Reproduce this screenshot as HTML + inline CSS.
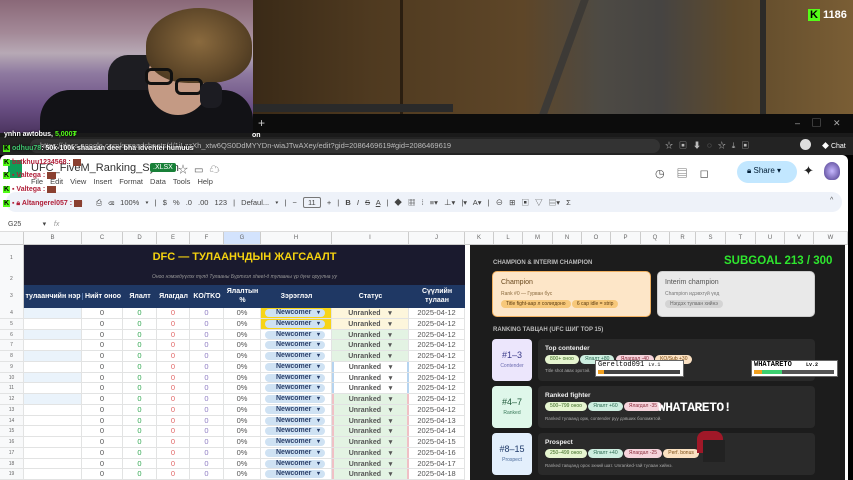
<!DOCTYPE html>
<html><head><meta charset="utf-8"><style>
*{margin:0;padding:0;box-sizing:border-box}
body{width:853px;height:480px;overflow:hidden;background:#000;font-family:"Liberation Sans","Noto Sans CJK JP",sans-serif;position:relative}
.a{position:absolute}
.t{position:absolute;white-space:nowrap}
.row{position:absolute;left:0;height:10.75px;width:465px;border-bottom:1px solid #e2e3e3;font-size:7.5px;color:#555}
.row>div{position:absolute;top:0;height:100%;text-align:center;line-height:10px;border-right:1px solid #e2e3e3}
.hdr div{position:absolute;top:0;height:100%;border-right:1px solid #ccc;text-align:center;font-size:6px;color:#666;line-height:12px}
.pill{border-radius:6px;padding:0 5px;font-size:5px;display:inline-block;line-height:9px}
.nc{position:absolute;left:4px;top:1px;width:60px;height:8px;border-radius:5px;background:#cfe2f3;color:#2a3f6a;font-size:7px;font-weight:bold;line-height:8px;text-align:left;padding-left:11px}
.nc:after{content:"▾";position:absolute;right:5px;font-size:6px}
.ur{font-size:7px;font-weight:bold;color:#555}
</style></head><body>

<!-- webcam -->
<div class="a" style="left:0;top:0;width:253px;height:133px;background:linear-gradient(180deg,#8a6878 0%,#a48a98 25%,#b7a9b5 40%,#8f7aa0 55%,#6a4f84 80%,#4c3560 100%)"></div>
<div class="a" style="left:108px;top:55px;width:60px;height:60px;background:#1d1d22;border-radius:20px"></div>
<div class="a" style="left:40px;top:90px;width:213px;height:43px;background:#121216;border-radius:30px 30px 0 0"></div>
<div class="a" style="left:148px;top:50px;width:60px;height:65px;background:#c49a84;border-radius:25px 25px 30px 30px"></div>
<div class="a" style="left:146px;top:8px;width:106px;height:75px;background:radial-gradient(ellipse at 50% 45%,#8a6a3e,#5d4628 60%,#3a2c1a 100%);border-radius:50% 50% 40% 40%"></div>
<div class="a" style="left:145px;top:68px;width:28px;height:17px;border:3px solid #111;border-radius:6px"></div>
<div class="a" style="left:175px;top:78px;width:28px;height:17px;border:3px solid #111;border-radius:6px"></div>
<div class="a" style="left:200px;top:82px;width:22px;height:26px;background:#1c1c22;border-radius:8px"></div>

<!-- game -->
<div class="a" style="left:253px;top:0;width:600px;height:114px;background:linear-gradient(90deg,#3a2a17 0%,#4f3a20 20%,#5e4628 45%,#4d4a44 58%,#464442 68%,#5f4a2b 80%,#7a5e35 100%)"></div>
<div class="a" style="left:400px;top:0;width:3px;height:114px;background:#2a1e10"></div>
<div class="a" style="left:560px;top:0;width:8px;height:114px;background:#3d3a36;transform:skewX(-20deg)"></div>
<div class="a" style="left:760px;top:0;width:6px;height:114px;background:#2c2b28"></div>
<div class="a" style="left:253px;top:104px;width:200px;height:8px;background:#2a2a2a"></div>
<div class="t" style="left:808px;top:9px;font-size:11px;font-weight:bold;color:#fff"><span style="background:#53fc18;color:#000;padding:0 2px">K</span> 1186</div>

<!-- browser bars -->
<div class="a" style="left:253px;top:114px;width:600px;height:21px;background:#0c0c0c"></div>
<div class="t" style="left:258px;top:116px;color:#ccc;font-size:12px">+</div>
<div class="t" style="left:795px;top:116px;color:#aaa;font-size:9px;letter-spacing:12px">–▢✕</div>
<div class="a" style="left:0;top:133px;width:853px;height:4px;background:#1a1a1a"></div>
<div class="a" style="left:0;top:137px;width:853px;height:18px;background:#232323"></div>
<div class="a" style="left:30px;top:139px;width:630px;height:14px;background:#333;border-radius:7px"></div>
<div class="t" style="left:40px;top:141px;font-size:7.5px;color:#bbb">https://docs.google.com/spreadsheets/d/1iLzzXh_xtw6QS0DdMYYDn-wiaJTwAXey/edit?gid=2086469619#gid=2086469619</div>
<div class="t" style="left:665px;top:140px;font-size:8px;color:#bbb;letter-spacing:6px">☆▣⬇◌☆⤓▣</div>
<div class="a" style="left:800px;top:139px;width:11px;height:11px;border-radius:50%;background:#ddd"></div>
<div class="t" style="left:822px;top:141px;font-size:7px;color:#fff">◆ Chat</div>

<!-- sheets -->
<div class="a" style="left:0;top:155px;width:848px;height:325px;background:#fff;border-radius:6px 6px 0 0"></div>
<div class="a" style="left:848px;top:155px;width:5px;height:325px;background:#000"></div>
<div class="a" style="left:8px;top:160px;width:14px;height:18px;background:#0f9d58;border-radius:2px"></div>
<div class="t" style="left:31px;top:162px;font-size:11px;color:#333">UFC_FiveM_Ranking_System</div>
<div class="t" style="left:150px;top:163px;font-size:7px;color:#fff;background:#188038;padding:1px 3px;border-radius:2px">.XLSX</div>
<div class="t" style="left:178px;top:161px;font-size:10px;color:#555;letter-spacing:6px">☆▭☁</div>
<div class="t" style="left:31px;top:177px;font-size:7.5px;color:#444;word-spacing:5px">File Edit View Insert Format Data Tools Help</div>
<div class="t" style="left:655px;top:165px;font-size:11px;color:#444;letter-spacing:12px">◷▤◻</div>
<div class="a" style="left:737px;top:161px;width:60px;height:22px;background:#c2e7ff;border-radius:11px"></div>
<div class="t" style="left:747px;top:166px;font-size:8px;color:#001d35">🔒︎ Share  ▾</div>
<div class="t" style="left:803px;top:163px;font-size:13px;color:#222">✦</div>
<div class="a" style="left:824px;top:162px;width:16px;height:18px;background:radial-gradient(#c7b8ff,#4b3a8a);border-radius:50% 50% 40% 40%"></div>
<div class="a" style="left:6px;top:192px;width:836px;height:20px;background:#eef2f9;border-radius:10px"></div>
<div class="t" style="left:96px;top:197px;font-size:7.5px;color:#444;word-spacing:4px">⎙ ⌫ 100% ▾ | $ % .0 .00 123 | Defaul... ▾ | − <span style="border:1px solid #777;padding:0 4px;border-radius:2px">11</span> + | <b>B</b> <i>I</i> <s>S</s> <u>A</u> | ◆ ▦ ⁞ ≡▾ ⊥▾ |▾ A▾ | ⊖ ⊞ ▣ ▽ ▤▾ Σ</div>
<div class="t" style="left:830px;top:197px;font-size:7px;color:#555">^</div>
<div class="t" style="left:8px;top:220px;font-size:7px;color:#444">G25 &nbsp;&nbsp;&nbsp;&nbsp;&nbsp;&nbsp;&nbsp;&nbsp;&nbsp; ▾ &nbsp;&nbsp; <i style="color:#999">fx</i></div>
<div class="a" style="left:0;top:231px;width:848px;height:1px;background:#ddd"></div>

<!-- column headers -->
<div class="a hdr" style="left:0;top:232px;width:848px;height:13px;background:#f8f9fa;border-bottom:1px solid #ccc">
<div style="left:0;width:24px"></div><div style="left:24px;width:58px">B</div><div style="left:82px;width:41px">C</div><div style="left:123px;width:34px">D</div><div style="left:157px;width:33px">E</div><div style="left:190px;width:34px">F</div><div style="left:224px;width:37px;background:#d3e3fd">G</div><div style="left:261px;width:71px">H</div><div style="left:332px;width:77px">I</div><div style="left:409px;width:56px">J</div>
<div style="left:465px;width:29px">K</div><div style="left:494px;width:29px">L</div><div style="left:523px;width:30px">M</div><div style="left:553px;width:29px">N</div><div style="left:582px;width:29px">O</div><div style="left:611px;width:30px">P</div><div style="left:641px;width:29px">Q</div><div style="left:670px;width:26px">R</div><div style="left:696px;width:30px">S</div><div style="left:726px;width:30px">T</div><div style="left:756px;width:29px">U</div><div style="left:785px;width:29px">V</div><div style="left:814px;width:34px">W</div>
</div>

<!-- row numbers -->
<div class="a" style="left:0;top:245px;width:24px;height:235px;background:#f8f9fa;border-right:1px solid #ccc"></div>
<div class="t" style="left:10px;top:255px;font-size:5px;color:#666">1</div>
<div class="t" style="left:10px;top:276px;font-size:5px;color:#666">2</div>
<div class="t" style="left:10px;top:293px;font-size:5px;color:#666">3</div>

<!-- title block -->
<div class="a" style="left:24px;top:245px;width:441px;height:40px;background:#1a1a2e"></div>
<div class="t" style="left:24px;top:251px;width:441px;text-align:center;font-size:11px;font-weight:bold;color:#f5d20f">DFC — ТУЛААНЧДЫН ЖАГСААЛТ</div>
<div class="t" style="left:24px;top:274px;width:441px;text-align:center;font-size:5px;font-style:italic;color:#999">Оноо нэмэгдүүлэх тулд Тулааны Бүртгэл sheet-д тулааны үр дүнг оруулна уу</div>
<div class="a" style="left:24px;top:285px;width:441px;height:23px;background:#1f3864"></div>
<div class="a" style="left:24px;top:285px;width:441px;height:23px;font-size:7px;font-weight:bold;color:#fff">
<div class="t" style="left:0;width:58px;top:8px;text-align:center">тулаанчийн нэр</div>
<div class="t" style="left:58px;width:41px;top:8px;text-align:center;border-left:1px solid #5577aa">Нийт оноо</div>
<div class="t" style="left:99px;width:34px;top:8px;text-align:center">Ялалт</div>
<div class="t" style="left:133px;width:33px;top:8px;text-align:center">Ялагдал</div>
<div class="t" style="left:166px;width:34px;top:8px;text-align:center">KO/TKO</div>
<div class="t" style="left:200px;width:37px;top:2px;text-align:center;line-height:9px">Ялалтын<br>%</div>
<div class="t" style="left:237px;width:71px;top:8px;text-align:center">Зэрэглэл</div>
<div class="t" style="left:308px;width:77px;top:8px;text-align:center">Статус</div>
<div class="t" style="left:385px;width:56px;top:2px;text-align:center;line-height:9px">Сүүлийн<br>тулаан</div>
</div>

<!-- data rows -->
<div class="a" style="left:0;top:308px;width:465px;height:172px">
<div class="row" style="top:0px"><div style="left:0;width:24px;font-size:5px;color:#666">4</div><div style="left:24px;width:58px;background:#eaf3fb"></div><div style="left:82px;width:41px">0</div><div style="left:123px;width:34px;color:#34a853">0</div><div style="left:157px;width:33px;color:#e06666">0</div><div style="left:190px;width:34px;color:#8e7cc3">0</div><div style="left:224px;width:37px">0%</div><div style="left:261px;width:71px;background:#f7d417"><span class="nc">Newcomer</span></div><div style="left:332px;width:77px;background:#fdf6dc"><span class="ur">Unranked &nbsp;&nbsp;&nbsp;▾</span></div><div style="left:409px;width:56px">2025-04-12</div></div>
<div class="row" style="top:10.75px"><div style="left:0;width:24px;font-size:5px;color:#666">5</div><div style="left:24px;width:58px"></div><div style="left:82px;width:41px">0</div><div style="left:123px;width:34px;color:#34a853">0</div><div style="left:157px;width:33px;color:#e06666">0</div><div style="left:190px;width:34px;color:#8e7cc3">0</div><div style="left:224px;width:37px">0%</div><div style="left:261px;width:71px;background:#f7d417"><span class="nc">Newcomer</span></div><div style="left:332px;width:77px;background:#fdf6dc"><span class="ur">Unranked &nbsp;&nbsp;&nbsp;▾</span></div><div style="left:409px;width:56px">2025-04-12</div></div>
<div class="row" style="top:21.5px"><div style="left:0;width:24px;font-size:5px;color:#666">6</div><div style="left:24px;width:58px;background:#eaf3fb"></div><div style="left:82px;width:41px">0</div><div style="left:123px;width:34px;color:#34a853">0</div><div style="left:157px;width:33px;color:#e06666">0</div><div style="left:190px;width:34px;color:#8e7cc3">0</div><div style="left:224px;width:37px">0%</div><div style="left:261px;width:71px"><span class="nc">Newcomer</span></div><div style="left:332px;width:77px;background:#e3f3e3"><span class="ur">Unranked &nbsp;&nbsp;&nbsp;▾</span></div><div style="left:409px;width:56px">2025-04-12</div></div>
<div class="row" style="top:32.25px"><div style="left:0;width:24px;font-size:5px;color:#666">7</div><div style="left:24px;width:58px"></div><div style="left:82px;width:41px">0</div><div style="left:123px;width:34px;color:#34a853">0</div><div style="left:157px;width:33px;color:#e06666">0</div><div style="left:190px;width:34px;color:#8e7cc3">0</div><div style="left:224px;width:37px">0%</div><div style="left:261px;width:71px"><span class="nc">Newcomer</span></div><div style="left:332px;width:77px;background:#e3f3e3"><span class="ur">Unranked &nbsp;&nbsp;&nbsp;▾</span></div><div style="left:409px;width:56px">2025-04-12</div></div>
<div class="row" style="top:43px"><div style="left:0;width:24px;font-size:5px;color:#666">8</div><div style="left:24px;width:58px;background:#eaf3fb"></div><div style="left:82px;width:41px">0</div><div style="left:123px;width:34px;color:#34a853">0</div><div style="left:157px;width:33px;color:#e06666">0</div><div style="left:190px;width:34px;color:#8e7cc3">0</div><div style="left:224px;width:37px">0%</div><div style="left:261px;width:71px"><span class="nc">Newcomer</span></div><div style="left:332px;width:77px;background:#e3f3e3"><span class="ur">Unranked &nbsp;&nbsp;&nbsp;▾</span></div><div style="left:409px;width:56px">2025-04-12</div></div>
<div class="row" style="top:53.75px"><div style="left:0;width:24px;font-size:5px;color:#666">9</div><div style="left:24px;width:58px"></div><div style="left:82px;width:41px">0</div><div style="left:123px;width:34px;color:#34a853">0</div><div style="left:157px;width:33px;color:#e06666">0</div><div style="left:190px;width:34px;color:#8e7cc3">0</div><div style="left:224px;width:37px">0%</div><div style="left:261px;width:71px"><span class="nc">Newcomer</span></div><div style="left:332px;width:77px;border-left:2px solid #b6d4f0;border-right:2px solid #b6d4f0"><span class="ur">Unranked &nbsp;&nbsp;&nbsp;▾</span></div><div style="left:409px;width:56px">2025-04-12</div></div>
<div class="row" style="top:64.5px"><div style="left:0;width:24px;font-size:5px;color:#666">10</div><div style="left:24px;width:58px;background:#eaf3fb"></div><div style="left:82px;width:41px">0</div><div style="left:123px;width:34px;color:#34a853">0</div><div style="left:157px;width:33px;color:#e06666">0</div><div style="left:190px;width:34px;color:#8e7cc3">0</div><div style="left:224px;width:37px">0%</div><div style="left:261px;width:71px"><span class="nc">Newcomer</span></div><div style="left:332px;width:77px;border-left:2px solid #b6d4f0;border-right:2px solid #b6d4f0"><span class="ur">Unranked &nbsp;&nbsp;&nbsp;▾</span></div><div style="left:409px;width:56px">2025-04-12</div></div>
<div class="row" style="top:75.25px"><div style="left:0;width:24px;font-size:5px;color:#666">11</div><div style="left:24px;width:58px"></div><div style="left:82px;width:41px">0</div><div style="left:123px;width:34px;color:#34a853">0</div><div style="left:157px;width:33px;color:#e06666">0</div><div style="left:190px;width:34px;color:#8e7cc3">0</div><div style="left:224px;width:37px">0%</div><div style="left:261px;width:71px"><span class="nc">Newcomer</span></div><div style="left:332px;width:77px;border-left:2px solid #b6d4f0;border-right:2px solid #b6d4f0"><span class="ur">Unranked &nbsp;&nbsp;&nbsp;▾</span></div><div style="left:409px;width:56px">2025-04-12</div></div>
<div class="row" style="top:86px"><div style="left:0;width:24px;font-size:5px;color:#666">12</div><div style="left:24px;width:58px;background:#eaf3fb"></div><div style="left:82px;width:41px">0</div><div style="left:123px;width:34px;color:#34a853">0</div><div style="left:157px;width:33px;color:#e06666">0</div><div style="left:190px;width:34px;color:#8e7cc3">0</div><div style="left:224px;width:37px">0%</div><div style="left:261px;width:71px"><span class="nc">Newcomer</span></div><div style="left:332px;width:77px;background:#e3f3e3;border-left:2px solid #f0c0c6;border-right:2px solid #f0c0c6"><span class="ur">Unranked &nbsp;&nbsp;&nbsp;▾</span></div><div style="left:409px;width:56px">2025-04-12</div></div>
<div class="row" style="top:96.75px"><div style="left:0;width:24px;font-size:5px;color:#666">13</div><div style="left:24px;width:58px"></div><div style="left:82px;width:41px">0</div><div style="left:123px;width:34px;color:#34a853">0</div><div style="left:157px;width:33px;color:#e06666">0</div><div style="left:190px;width:34px;color:#8e7cc3">0</div><div style="left:224px;width:37px">0%</div><div style="left:261px;width:71px"><span class="nc">Newcomer</span></div><div style="left:332px;width:77px;background:#e3f3e3;border-left:2px solid #f0c0c6;border-right:2px solid #f0c0c6"><span class="ur">Unranked &nbsp;&nbsp;&nbsp;▾</span></div><div style="left:409px;width:56px">2025-04-12</div></div>
<div class="row" style="top:107.5px"><div style="left:0;width:24px;font-size:5px;color:#666">14</div><div style="left:24px;width:58px"></div><div style="left:82px;width:41px">0</div><div style="left:123px;width:34px;color:#34a853">0</div><div style="left:157px;width:33px;color:#e06666">0</div><div style="left:190px;width:34px;color:#8e7cc3">0</div><div style="left:224px;width:37px">0%</div><div style="left:261px;width:71px"><span class="nc">Newcomer</span></div><div style="left:332px;width:77px;background:#e3f3e3;border-left:2px solid #f0c0c6;border-right:2px solid #f0c0c6"><span class="ur">Unranked &nbsp;&nbsp;&nbsp;▾</span></div><div style="left:409px;width:56px">2025-04-13</div></div>
<div class="row" style="top:118.25px"><div style="left:0;width:24px;font-size:5px;color:#666">15</div><div style="left:24px;width:58px"></div><div style="left:82px;width:41px">0</div><div style="left:123px;width:34px;color:#34a853">0</div><div style="left:157px;width:33px;color:#e06666">0</div><div style="left:190px;width:34px;color:#8e7cc3">0</div><div style="left:224px;width:37px">0%</div><div style="left:261px;width:71px"><span class="nc">Newcomer</span></div><div style="left:332px;width:77px;background:#e3f3e3;border-left:2px solid #f0c0c6;border-right:2px solid #f0c0c6"><span class="ur">Unranked &nbsp;&nbsp;&nbsp;▾</span></div><div style="left:409px;width:56px">2025-04-14</div></div>
<div class="row" style="top:129px"><div style="left:0;width:24px;font-size:5px;color:#666">16</div><div style="left:24px;width:58px"></div><div style="left:82px;width:41px">0</div><div style="left:123px;width:34px;color:#34a853">0</div><div style="left:157px;width:33px;color:#e06666">0</div><div style="left:190px;width:34px;color:#8e7cc3">0</div><div style="left:224px;width:37px">0%</div><div style="left:261px;width:71px"><span class="nc">Newcomer</span></div><div style="left:332px;width:77px;background:#e3f3e3;border-left:2px solid #f0c0c6;border-right:2px solid #f0c0c6"><span class="ur">Unranked &nbsp;&nbsp;&nbsp;▾</span></div><div style="left:409px;width:56px">2025-04-15</div></div>
<div class="row" style="top:139.75px"><div style="left:0;width:24px;font-size:5px;color:#666">17</div><div style="left:24px;width:58px"></div><div style="left:82px;width:41px">0</div><div style="left:123px;width:34px;color:#34a853">0</div><div style="left:157px;width:33px;color:#e06666">0</div><div style="left:190px;width:34px;color:#8e7cc3">0</div><div style="left:224px;width:37px">0%</div><div style="left:261px;width:71px"><span class="nc">Newcomer</span></div><div style="left:332px;width:77px;background:#e3f3e3;border-left:2px solid #f0c0c6;border-right:2px solid #f0c0c6"><span class="ur">Unranked &nbsp;&nbsp;&nbsp;▾</span></div><div style="left:409px;width:56px">2025-04-16</div></div>
<div class="row" style="top:150.5px"><div style="left:0;width:24px;font-size:5px;color:#666">18</div><div style="left:24px;width:58px"></div><div style="left:82px;width:41px">0</div><div style="left:123px;width:34px;color:#34a853">0</div><div style="left:157px;width:33px;color:#e06666">0</div><div style="left:190px;width:34px;color:#8e7cc3">0</div><div style="left:224px;width:37px">0%</div><div style="left:261px;width:71px"><span class="nc">Newcomer</span></div><div style="left:332px;width:77px;background:#e3f3e3;border-left:2px solid #f0c0c6;border-right:2px solid #f0c0c6"><span class="ur">Unranked &nbsp;&nbsp;&nbsp;▾</span></div><div style="left:409px;width:56px">2025-04-17</div></div>
<div class="row" style="top:161.25px"><div style="left:0;width:24px;font-size:5px;color:#666">19</div><div style="left:24px;width:58px"></div><div style="left:82px;width:41px">0</div><div style="left:123px;width:34px;color:#34a853">0</div><div style="left:157px;width:33px;color:#e06666">0</div><div style="left:190px;width:34px;color:#8e7cc3">0</div><div style="left:224px;width:37px">0%</div><div style="left:261px;width:71px"><span class="nc">Newcomer</span></div><div style="left:332px;width:77px;background:#e3f3e3;border-left:2px solid #f0c0c6;border-right:2px solid #f0c0c6"><span class="ur">Unranked &nbsp;&nbsp;&nbsp;▾</span></div><div style="left:409px;width:56px">2025-04-18</div></div>
</div>

<!-- right dark panel -->
<div class="a" style="left:465px;top:245px;width:383px;height:235px;background:#fff"></div>
<div class="a" style="left:470px;top:245px;width:375px;height:235px;background:#1c1c1c"></div>
<div class="t" style="left:493px;top:260px;font-size:6px;font-weight:bold;color:#bbb">CHAMPION &amp; INTERIM CHAMPION</div>
<div class="t" style="left:724px;top:255px;font-size:11.5px;font-weight:bold;color:#2ee62e">SUBGOAL 213 / 300</div>
<div class="a" style="left:492px;top:271px;width:159px;height:46px;background:#fde6c8;border:1px solid #f0b060;border-radius:5px"></div>
<div class="t" style="left:501px;top:279px;font-size:7px;color:#6b4a1e">Champion</div>
<div class="t" style="left:501px;top:291px;font-size:5px;color:#8a6a3e">Rank #0 — Гурван бус</div>
<div class="t" style="left:501px;top:300px;font-size:4.5px;color:#5a3a10"><span class="pill" style="background:#f7c87a;line-height:8px">Title fight-аар л солигдоно</span> <span class="pill" style="background:#f7c87a;line-height:8px">6 сар idle = strip</span></div>
<div class="a" style="left:657px;top:271px;width:158px;height:46px;background:#e9e9e9;border:1px solid #ccc;border-radius:5px"></div>
<div class="t" style="left:665px;top:279px;font-size:7px;color:#555">Interim champion</div>
<div class="t" style="left:665px;top:291px;font-size:5px;color:#777">Champion идэвхгүй үед</div>
<div class="t" style="left:665px;top:300px;font-size:4.5px;color:#666"><span class="pill" style="background:#d4d4d4;line-height:8px">Нэгдэх тулаан хийнэ</span></div>
<div class="t" style="left:493px;top:327px;font-size:6px;font-weight:bold;color:#bbb">RANKING ТАВЦАН (UFC ШИГ TOP 15)</div>

<div class="a" style="left:492px;top:339px;width:40px;height:42px;background:#ece6fc;border-radius:4px"></div>
<div class="t" style="left:492px;top:350px;width:40px;text-align:center;font-size:9px;color:#3b3b8a">#1–3</div>
<div class="t" style="left:492px;top:363px;width:40px;text-align:center;font-size:5px;color:#6b6bb0">Contender</div>
<div class="a" style="left:538px;top:339px;width:277px;height:42px;background:#2a2a2a;border-radius:4px"></div>
<div class="t" style="left:545px;top:345px;font-size:6.5px;font-weight:bold;color:#eee">Top contender</div>
<div class="t" style="left:545px;top:355px;font-size:4.5px"><span class="pill" style="background:#e6f5d0;color:#3a6a20">800+ оноо</span> <span class="pill" style="background:#cdeee0;color:#2a6a50">Ялалт +80</span> <span class="pill" style="background:#f6d4dc;color:#8a2a3a">Ялагдал -40</span> <span class="pill" style="background:#fbe1c2;color:#7a4a10">KO/Sub +30</span></div>
<div class="t" style="left:545px;top:368px;font-size:4.5px;color:#aaa">Title shot авах эрхтэй.</div>

<div class="a" style="left:492px;top:386px;width:40px;height:42px;background:#dff7ea;border-radius:4px"></div>
<div class="t" style="left:492px;top:397px;width:40px;text-align:center;font-size:9px;color:#1f5a3a">#4–7</div>
<div class="t" style="left:492px;top:410px;width:40px;text-align:center;font-size:5px;color:#3a7a5a">Ranked</div>
<div class="a" style="left:538px;top:386px;width:277px;height:42px;background:#2a2a2a;border-radius:4px"></div>
<div class="t" style="left:545px;top:392px;font-size:6.5px;font-weight:bold;color:#eee">Ranked fighter</div>
<div class="t" style="left:545px;top:402px;font-size:4.5px"><span class="pill" style="background:#e6f5d0;color:#3a6a20">500–799 оноо</span> <span class="pill" style="background:#cdeee0;color:#2a6a50">Ялалт +60</span> <span class="pill" style="background:#f6d4dc;color:#8a2a3a">Ялагдал -35</span></div>
<div class="t" style="left:545px;top:416px;font-size:4.5px;color:#aaa">Ranked тулаанд орж, contender руу дэвших боломжтой.</div>

<div class="a" style="left:492px;top:433px;width:40px;height:42px;background:#e3effc;border-radius:4px"></div>
<div class="t" style="left:492px;top:444px;width:40px;text-align:center;font-size:9px;color:#1f3a6a">#8–15</div>
<div class="t" style="left:492px;top:457px;width:40px;text-align:center;font-size:5px;color:#4a6a9a">Prospect</div>
<div class="a" style="left:538px;top:433px;width:277px;height:42px;background:#2a2a2a;border-radius:4px"></div>
<div class="t" style="left:545px;top:439px;font-size:6.5px;font-weight:bold;color:#eee">Prospect</div>
<div class="t" style="left:545px;top:449px;font-size:4.5px"><span class="pill" style="background:#e6f5d0;color:#3a6a20">250–499 оноо</span> <span class="pill" style="background:#cdeee0;color:#2a6a50">Ялалт +40</span> <span class="pill" style="background:#f6d4dc;color:#8a2a3a">Ялагдал -25</span> <span class="pill" style="background:#fbe1c2;color:#7a4a10">Perf. bonus</span></div>
<div class="t" style="left:545px;top:463px;font-size:4.5px;color:#aaa">Ranked тавцанд орох эхний шат. Unranked-тай тулаан хийнэ.</div>

<!-- game overlays -->
<div class="a" style="left:595px;top:360px;width:89px;height:17px;background:#fff;border:1px solid #666"></div>
<div class="t" style="left:598px;top:361px;font-family:'Liberation Mono',monospace;font-size:7px;color:#000">Gereltod091 <span style="font-size:5px">Lv.1</span></div>
<div class="a" style="left:598px;top:370px;width:82px;height:4px;background:#444"></div>
<div class="a" style="left:598px;top:370px;width:6px;height:4px;background:#f0a020"></div>
<div class="a" style="left:751px;top:360px;width:87px;height:17px;background:#fff;border:1px solid #666"></div>
<div class="t" style="left:754px;top:361px;font-family:'Liberation Mono',monospace;font-size:7px;font-weight:bold;color:#000">WHATARETO <span style="font-size:5px;margin-left:10px">Lv.2</span></div>
<div class="a" style="left:754px;top:370px;width:80px;height:4px;background:#555"></div>
<div class="a" style="left:754px;top:370px;width:8px;height:4px;background:#f0a020"></div>
<div class="a" style="left:762px;top:370px;width:20px;height:4px;background:#3cd070"></div>
<div class="t" style="left:658px;top:400px;font-family:'Liberation Mono',monospace;font-size:13px;font-weight:bold;color:#fff;letter-spacing:-0.5px">WHATARETO!</div>
<div class="a" style="left:697px;top:431px;width:26px;height:22px;background:#a01828;border-radius:8px 8px 0 0"></div>
<div class="a" style="left:703px;top:440px;width:22px;height:22px;background:#222"></div>

<!-- chat overlay -->
<div class="t" style="left:4px;top:131px;font-size:7px;font-weight:bold;color:#fff;text-shadow:0 0 2px #000">ynhn awtobus, <span style="color:#53fc18">5,000₮</span></div>
<div class="t" style="left:252px;top:132px;font-size:7px;font-weight:bold;color:#fff">on</div>
<div class="t" style="left:3px;top:145px;font-size:7px;font-weight:bold;color:#fff;text-shadow:0 0 2px #000"><span style="background:#53fc18;color:#000;padding:0 1px">K</span> <span style="color:#3ec46d">odhuu78</span>: 50k-100k shaasan deer bha idvehtei humuus</div>
<div class="t" style="left:3px;top:159px;font-size:7px;font-weight:bold;color:#b0203a"><span style="background:#53fc18;color:#000;padding:0 1px">K</span> batkhuu1234568 : <span style="background:#8a4030;color:#8a4030">■■</span></div>
<div class="t" style="left:3px;top:172px;font-size:7px;font-weight:bold;color:#b0203a"><span style="background:#53fc18;color:#000;padding:0 1px">K</span> ▪ Valtega : <span style="background:#8a4030;color:#8a4030">■■</span></div>
<div class="t" style="left:3px;top:186px;font-size:7px;font-weight:bold;color:#b0203a"><span style="background:#53fc18;color:#000;padding:0 1px">K</span> ▪ Valtega : <span style="background:#8a4030;color:#8a4030">■■</span></div>
<div class="t" style="left:3px;top:200px;font-size:7px;font-weight:bold;color:#b0203a"><span style="background:#53fc18;color:#000;padding:0 1px">K</span> ▪ 🔒︎ Altangerel057 : <span style="background:#8a4030;color:#8a4030">■■</span></div>
</body></html>
